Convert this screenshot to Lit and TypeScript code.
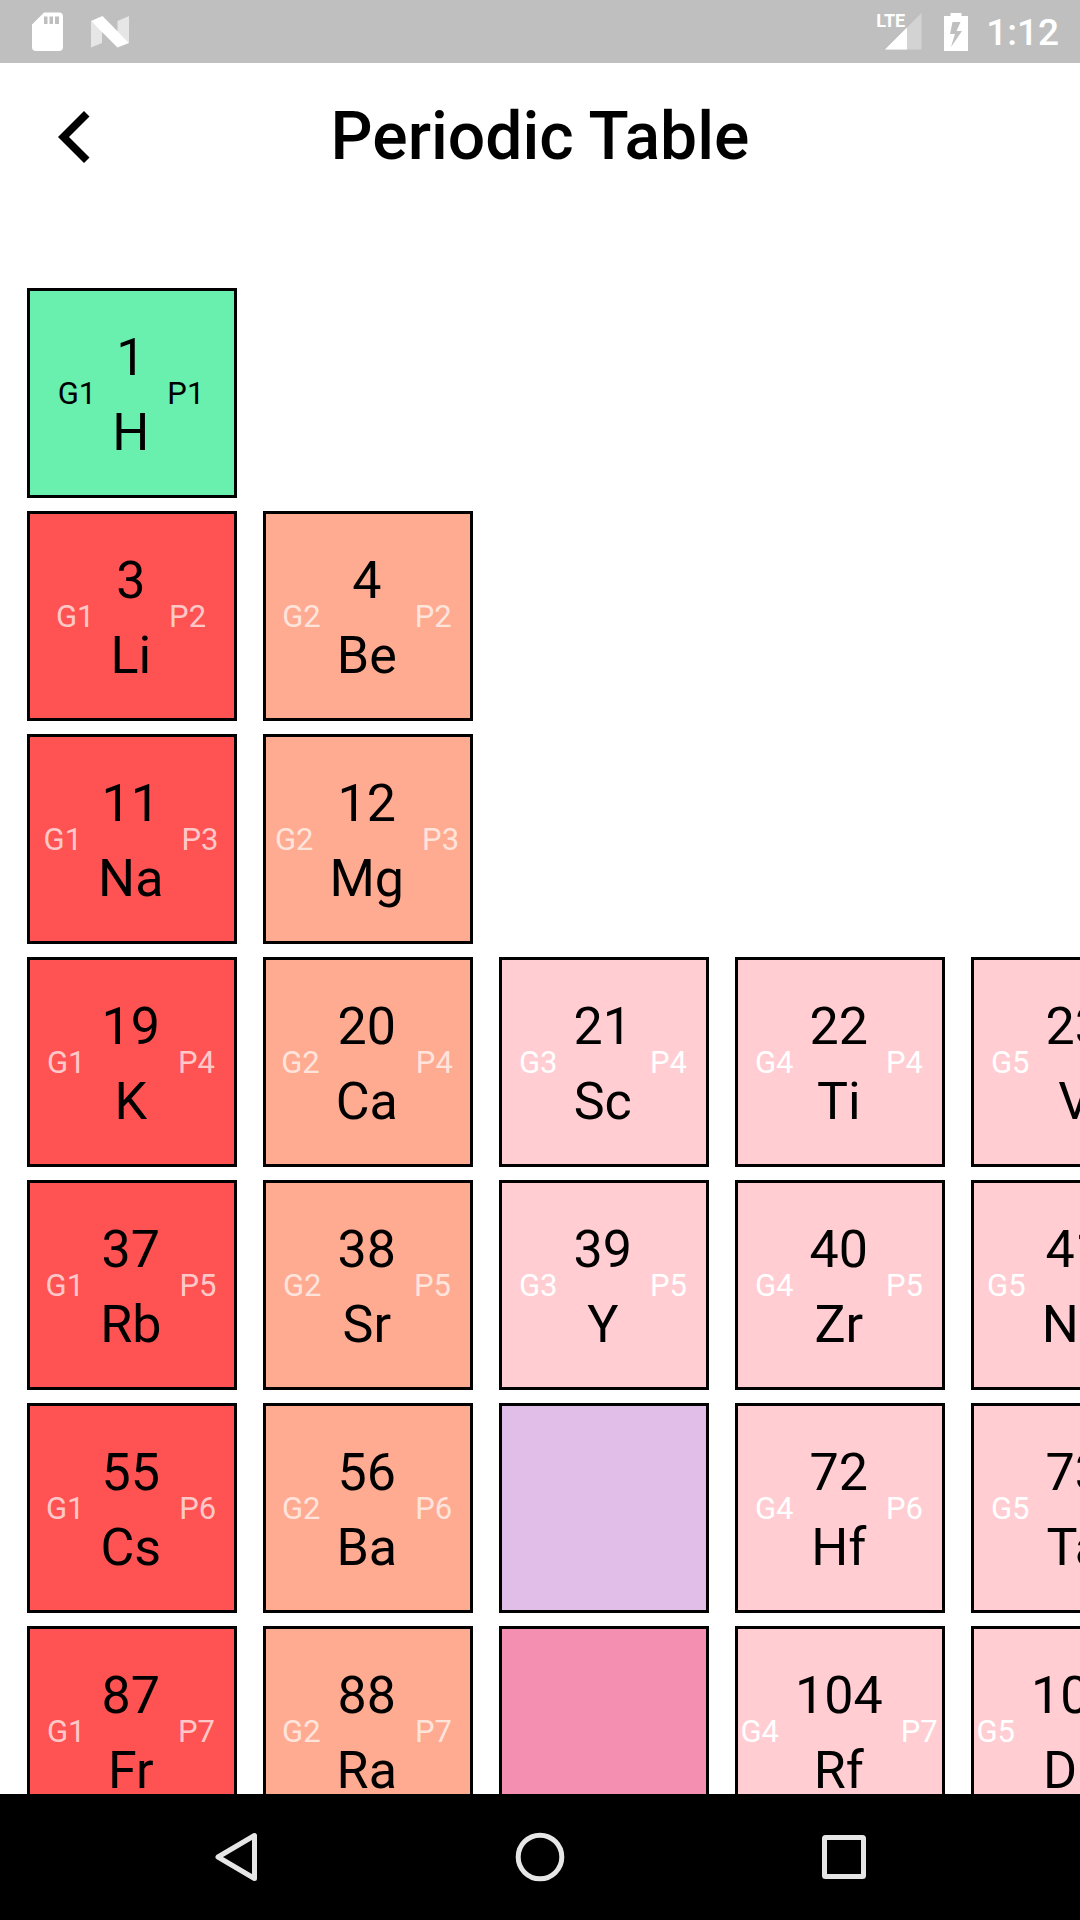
import { LitElement, html, css, svg, nothing } from "lit";
import { customElement, property } from "lit/decorators.js";
import { styleMap } from "lit/directives/style-map.js";

type Family = "nonmetal" | "alkali" | "alkaline" | "transition" | "lanthanide" | "actinide";

interface Cell {
  group: number;
  period: number;
  family: Family;
  number?: number;
  symbol?: string;
}

const cell = (group: number, period: number, family: Family, number?: number, symbol?: string): Cell => ({
  group,
  period,
  family,
  number,
  symbol,
});

const CELLS: Cell[] = [
  cell(1, 1, "nonmetal", 1, "H"),
  cell(1, 2, "alkali", 3, "Li"),
  cell(2, 2, "alkaline", 4, "Be"),
  cell(1, 3, "alkali", 11, "Na"),
  cell(2, 3, "alkaline", 12, "Mg"),
  cell(1, 4, "alkali", 19, "K"),
  cell(2, 4, "alkaline", 20, "Ca"),
  cell(3, 4, "transition", 21, "Sc"),
  cell(4, 4, "transition", 22, "Ti"),
  cell(5, 4, "transition", 23, "V"),
  cell(1, 5, "alkali", 37, "Rb"),
  cell(2, 5, "alkaline", 38, "Sr"),
  cell(3, 5, "transition", 39, "Y"),
  cell(4, 5, "transition", 40, "Zr"),
  cell(5, 5, "transition", 41, "Nb"),
  cell(1, 6, "alkali", 55, "Cs"),
  cell(2, 6, "alkaline", 56, "Ba"),
  cell(3, 6, "lanthanide"),
  cell(4, 6, "transition", 72, "Hf"),
  cell(5, 6, "transition", 73, "Ta"),
  cell(1, 7, "alkali", 87, "Fr"),
  cell(2, 7, "alkaline", 88, "Ra"),
  cell(3, 7, "actinide"),
  cell(4, 7, "transition", 104, "Rf"),
  cell(5, 7, "transition", 105, "Db"),
];

@customElement("status-bar")
export class StatusBar extends LitElement {
  static styles = css`
    :host {
      display: flex;
      align-items: center;
      justify-content: space-between;
      flex: none;
      height: 63px;
      padding: 0 21px 0 32px;
      background: #bfbfbf;
      color: #fff;
    }
    .side {
      display: flex;
      align-items: center;
    }
    .notices {
      gap: 28px;
    }
    .system {
      gap: 22px;
    }
    .network {
      display: flex;
      position: relative;
      padding-left: 9px;
    }
    .kind {
      position: absolute;
      left: 0;
      top: 0;
      font: 700 18px/16px "Liberation Sans Narrow", Roboto, sans-serif;
    }
    .power {
      display: flex;
      align-items: center;
      gap: 18px;
    }
    .clock {
      padding-top: 2px;
      font-size: 37px;
      line-height: 44px;
      font-weight: 500;
    }
    svg {
      display: block;
    }
  `;

  render() {
    return html`
      <div class="side notices">
        <svg width="31" height="39" viewBox="0 0 31 39" aria-hidden="true">
          <path
            fill="#fff"
            fill-rule="evenodd"
            d="M12 0.5H27Q31 0.5 31 4.500V35Q31 39 27 39H4Q0 39 0 35V12.500ZM12 4.500V12H15.500V4.500ZM17.500 4.500V12H21V4.500ZM23 4.500V12H27V4.500Z"
          />
        </svg>
        <svg width="38" height="32" viewBox="0 0 38 32" aria-hidden="true">
          <path fill="#e6e6e6" d="M0 5L11 15V27L0 31.500ZM38 0V27L26.500 16V5Z" />
          <path fill="#fff" d="M0 5L11.500 0L38 27L26.500 31.500Z" />
        </svg>
      </div>
      <div class="side system">
        <div class="network">
          <span class="kind">LTE</span>
          <svg width="37" height="37" viewBox="0 0 37 37" aria-hidden="true">
            <path fill="#d3d3d3" d="M36.500 0V36.500H0Z" />
            <path fill="#fff" d="M22 14.500V36.500H0Z" />
          </svg>
        </div>
        <div class="power">
          <svg width="24" height="38" viewBox="0 0 24 38" aria-hidden="true">
            <path
              fill="#fff"
              fill-rule="evenodd"
              d="M6.500 0H17.500V3H24V38H0V3H6.500ZM8.500 9L6 21H11L7 34L18 18H12.500L16.500 9Z"
            />
          </svg>
          <span class="clock">1:12</span>
        </div>
      </div>
    `;
  }
}

@customElement("element-tile")
export class ElementTile extends LitElement {
  @property({ attribute: false }) cell!: Cell;

  static styles = css`
    :host {
      display: block;
    }
    .tile {
      display: flex;
      align-items: center;
      justify-content: center;
      gap: 16px;
      box-sizing: border-box;
      width: 100%;
      height: 100%;
      margin: 0;
      padding: 0 2px 0 0;
      border: 3px solid #000;
      font: inherit;
      font-size: 31px;
      line-height: 37px;
      color: #fff;
    }
    .main {
      display: flex;
      flex-direction: column;
      align-items: center;
      gap: 13px;
      padding: 5px 2px 0 0;
      font-size: 52px;
      line-height: 62px;
      color: #000;
    }
    .nonmetal {
      background: #69f0ae;
      color: #000;
    }
    .alkali {
      background: #ff5252;
      color: rgba(255, 255, 255, 0.7);
    }
    .alkaline {
      background: #ffab91;
      color: rgba(255, 255, 255, 0.7);
    }
    .transition {
      background: #ffcdd2;
    }
    .lanthanide {
      background: #e1bee7;
    }
    .actinide {
      background: #f48fb1;
    }
  `;

  render() {
    const { group, period, family, number, symbol } = this.cell;
    return html`
      <button class="tile ${family}" type="button">
        ${symbol
          ? html`<span>G${group}</span>
              <span class="main"><span>${number}</span><span>${symbol}</span></span>
              <span>P${period}</span>`
          : nothing}
      </button>
    `;
  }
}

const NAV = [
  { name: "Back", shape: svg`<path d="M43.500 3.500V46.500L7 25Z" />` },
  { name: "Home", shape: svg`<circle cx="25" cy="25" r="21.800" />` },
  { name: "Overview", shape: svg`<rect x="5.500" y="5.500" width="39" height="39" rx="1" />` },
];

@customElement("nav-bar")
export class NavBar extends LitElement {
  static styles = css`
    :host {
      display: flex;
      justify-content: center;
      flex: none;
      height: 126px;
      background: #000;
    }
    .key {
      display: flex;
      align-items: center;
      justify-content: center;
      flex: 0 1 304px;
      padding: 0;
      border: 0;
      background: none;
    }
    svg {
      fill: none;
      stroke: #e6e6e6;
      stroke-width: 5;
      stroke-linejoin: round;
    }
  `;

  render() {
    return NAV.map(
      ({ name, shape }) => html`
        <button class="key" type="button" aria-label=${name}>
          <svg width="50" height="50" viewBox="0 0 50 50" aria-hidden="true">${shape}</svg>
        </button>
      `,
    );
  }
}

@customElement("app-root")
export class AppRoot extends LitElement {
  static styles = css`
    :host {
      display: flex;
      flex-direction: column;
      height: 100vh;
      background: #fff;
      color: #000;
      font-family: Roboto, sans-serif;
    }
    .header {
      display: grid;
      grid-template-columns: 148px 1fr 148px;
      align-items: center;
      flex: none;
      height: 147px;
    }
    .back {
      display: flex;
      align-items: center;
      justify-content: center;
      height: 100%;
      padding: 0;
      border: 0;
      background: none;
    }
    .title {
      margin: 0;
      text-align: center;
      font-size: 66px;
      line-height: 76px;
      font-weight: 500;
    }
    .content {
      flex: 1;
      min-height: 0;
      padding: 78px 27px 0;
      overflow: auto;
      scrollbar-width: none;
    }
    .table {
      display: grid;
      grid-auto-columns: 210px;
      grid-auto-rows: 210px;
      gap: 13px 26px;
    }
  `;

  render() {
    return html`
      <status-bar></status-bar>
      <header class="header">
        <button class="back" type="button" aria-label="Back">
          <svg width="32" height="52" viewBox="0 0 32 52" aria-hidden="true">
            <path d="M0 26L26 0L31.500 5.500L11 26L31.500 46.500L26 52Z" />
          </svg>
        </button>
        <h1 class="title">Periodic Table</h1>
      </header>
      <main class="content">
        <div class="table">
          ${CELLS.map(
            (c) => html`
              <element-tile .cell=${c} style=${styleMap({ gridArea: `${c.period} / ${c.group}` })}></element-tile>
            `,
          )}
        </div>
      </main>
      <nav-bar></nav-bar>
    `;
  }
}
